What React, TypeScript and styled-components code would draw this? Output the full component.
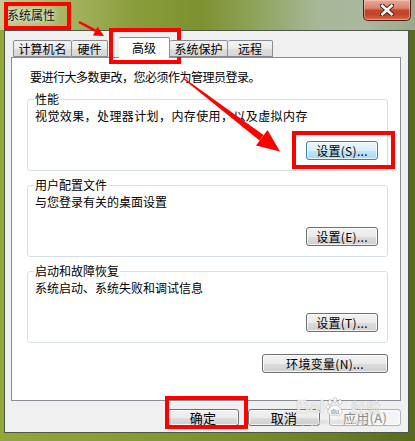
import React from 'react';
import styled, { createGlobalStyle } from 'styled-components';

const GlobalStyle = createGlobalStyle`
  html, body { margin: 0; padding: 0; }
  body {
    width: 415px; height: 441px; overflow: hidden;
    font-family: "Noto Sans CJK SC", "Noto Sans", sans-serif;
    color: #000;
  }
  * { box-sizing: border-box; }
`;

const Window = styled.div`
  position: relative;
  width: 415px;
  height: 441px;
  display: flex;
  flex-direction: column;
  overflow: hidden;
  background: linear-gradient(to right, #93a638 0%, #8a9e34 25%, #7a902c 55%, #6a7f26 80%, #56691f 100%);
`;

const TitleBar = styled.div`
  height: 30px;
  flex: none;
  display: flex;
  justify-content: space-between;
  align-items: flex-start;
  padding: 0 4px 0 7px;
  background: linear-gradient(to right, #c4cc92 0%, #aab766 14%, #8a9e3c 32%, #7c912f 48%, #8fa45c 62%, #a6b796 76%, #abb8a0 88%, #9ba98a 100%);
`;

const Title = styled.div`
  margin-top: 8px;
  font-size: 12px;
  line-height: 14px;
  color: #111;
  text-shadow: 0 0 4px rgba(255, 255, 255, 0.9), 0 0 8px rgba(255, 255, 255, 0.6);
`;

const CloseButton = styled.div`
  width: 48px;
  height: 21px;
  display: flex;
  align-items: center;
  justify-content: center;
  border: 1px solid #4a1d14;
  border-top: none;
  border-radius: 0 0 5px 5px;
  background: linear-gradient(#e9a897 0%, #dc8470 40%, #c6452c 52%, #c34328 72%, #dc6a47 100%);
  box-shadow: inset 0 0 0 1px rgba(255, 220, 210, 0.45);
`;

const Client = styled.div`
  flex: 1;
  margin: 0 6px 8px 4px;
  border: 1px solid #4e5648;
  background: #f0f0f0;
  display: flex;
  flex-direction: column;
  padding: 6px 7px 6px 6px;
`;

const TabRow = styled.div`
  display: flex;
  align-items: flex-end;
  height: 21px;
  margin-bottom: -1px;
  padding-left: 2px;
  position: relative;
  z-index: 1;
`;

const Tab = styled.div<{ $w: number; $active?: boolean; $gap?: number }>`
  width: ${(p) => p.$w}px;
  margin-left: ${(p) => p.$gap ?? 0}px;
  height: ${(p) => (p.$active ? 21 : 17)}px;
  margin-bottom: ${(p) => (p.$active ? 0 : 1)}px;
  border: 1px solid #898c95;
  border-bottom: ${(p) => (p.$active ? 'none' : '1px solid #898c95')};
  border-radius: 2px 2px 0 0;
  background: ${(p) =>
    p.$active ? '#ffffff' : 'linear-gradient(#f3f3f3 0%, #ebebeb 50%, #dddddd 51%, #d6d6d6 100%)'};
  font-size: 12px;
  line-height: ${(p) => (p.$active ? 20 : 16)}px;
  text-align: center;
  white-space: nowrap;
  & + & { border-left: ${(p) => (p.$active ? '1px solid #898c95' : 'none')}; }
`;

const Panel = styled.div`
  flex: 1;
  background: #fff;
  border: 1px solid #898c95;
  display: flex;
  flex-direction: column;
  padding: 12px 12px 0 15px;
`;

const Line = styled.div<{ $tracking?: number; $indent?: number }>`
  font-size: 12px;
  line-height: 14px;
  letter-spacing: ${(p) => p.$tracking ?? 0}px;
  margin-left: ${(p) => p.$indent ?? 0}px;
  white-space: nowrap;
`;

const Group = styled.fieldset<{ $top: number }>`
  margin: ${(p) => p.$top}px 0 0 0;
  padding: 3px 9px 10px 7px;
  border: 1px solid #d5dfe5;
  border-radius: 3px;
  min-width: 0;
`;

const Legend = styled.legend`
  font-size: 12px;
  line-height: 14px;
  padding: 0 1px;
  margin-left: -1px;
`;

const ButtonRow = styled.div<{ $top: number }>`
  display: flex;
  justify-content: flex-end;
  gap: 9px;
  margin-top: ${(p) => p.$top}px;
`;

const Button = styled.div<{ $w: number; $h?: number; $size?: number; $variant?: 'normal' | 'hot' | 'disabled' }>`
  width: ${(p) => p.$w}px;
  height: ${(p) => p.$h ?? 19}px;
  border-radius: 3px;
  display: flex;
  align-items: center;
  justify-content: center;
  font-size: ${(p) => p.$size ?? 12}px;
  line-height: 1;
  letter-spacing: 0.3px;
  white-space: nowrap;
  color: ${(p) => (p.$variant === 'disabled' ? '#8a8a8a' : '#000')};
  border: 1px solid
    ${(p) => (p.$variant === 'hot' ? '#3c7fb1' : p.$variant === 'disabled' ? '#adb2b5' : '#707070')};
  background: ${(p) =>
    p.$variant === 'hot'
      ? 'linear-gradient(#eaf6fd 0%, #d9f0fc 50%, #bee6fd 51%, #a7d9f5 100%)'
      : p.$variant === 'disabled'
      ? '#f4f4f4'
      : 'linear-gradient(#f2f2f2 0%, #ebebeb 50%, #dddddd 51%, #cfcfcf 100%)'};
  box-shadow: inset 0 0 0 1px rgba(255, 255, 255, 0.75);
`;

const EnvRow = styled.div`
  display: flex;
  justify-content: flex-end;
  margin-top: 11px;
`;

const FooterRow = styled.div`
  display: flex;
  justify-content: flex-end;
  gap: 9px;
  margin-top: 8px;
`;

const RedBox = styled.div<{ $x: number; $y: number; $w: number; $h: number }>`
  position: absolute;
  left: ${(p) => p.$x}px;
  top: ${(p) => p.$y}px;
  width: ${(p) => p.$w}px;
  height: ${(p) => p.$h}px;
  border: 4px solid #ff0000;
  pointer-events: none;
`;

const ArrowLayer = styled.svg`
  position: absolute;
  left: 0;
  top: 0;
  width: 415px;
  height: 441px;
  pointer-events: none;
`;

const Watermark = styled.div`
  position: absolute;
  left: 296px;
  top: 396px;
  display: flex;
  flex-direction: column;
  align-items: flex-start;
  pointer-events: none;
`;

const WatermarkMain = styled.div`
  display: flex;
  align-items: center;
  gap: 1px;
  color: rgba(255, 255, 255, 0.8);
  text-shadow: 0 0 1px rgba(90, 90, 90, 0.55);
`;

const WmBai = styled.span`
  font-family: "Liberation Sans", Arial, sans-serif;
  font-weight: bold;
  font-size: 19px;
  line-height: 22px;
  letter-spacing: -0.5px;
`;

const WmJingyan = styled.span`
  font-size: 15px;
  line-height: 22px;
  margin-left: 5px;
`;

const WmSub = styled.div`
  font-family: "Liberation Sans", Arial, sans-serif;
  font-size: 8px;
  line-height: 8px;
  margin-left: 6px;
  color: rgba(255, 255, 255, 0.75);
  text-shadow: 0 0 1px rgba(90, 90, 90, 0.5);
`;

function Paw() {
  return (
    <svg width="20" height="20" viewBox="0 0 20 20">
      <g fill="rgba(255,255,255,0.8)" stroke="rgba(90,90,90,0.45)" strokeWidth="0.6">
        <ellipse cx="5" cy="5" rx="2" ry="2.6" />
        <ellipse cx="10" cy="3" rx="2" ry="2.6" />
        <ellipse cx="15" cy="5" rx="2" ry="2.6" />
        <ellipse cx="3" cy="10" rx="1.8" ry="2.3" />
        <path d="M10 8 C 14 8, 18 13, 17 16 C 16 19, 12 18, 10 18 C 8 18, 4 19, 3 16 C 2 13, 6 8, 10 8 Z" />
      </g>
      <text x="10" y="16.5" fontSize="7" textAnchor="middle" fontFamily="Liberation Sans, Arial, sans-serif" fontWeight="bold" fill="rgba(150,150,150,0.6)">du</text>
    </svg>
  );
}

function CloseGlyph() {
  return (
    <svg width="14" height="12" viewBox="0 0 14 12">
      <path d="M2 1.5 L12 10.5 M12 1.5 L2 10.5" stroke="#4b2b26" strokeWidth="4.6" strokeLinecap="square" />
      <path d="M2.4 1.9 L11.6 10.1 M11.6 1.9 L2.4 10.1" stroke="#ffffff" strokeWidth="2.6" strokeLinecap="square" />
    </svg>
  );
}

export default function App() {
  return (
    <>
      <GlobalStyle />
      <Window>
        <TitleBar>
          <Title>系统属性</Title>
          <CloseButton>
            <CloseGlyph />
          </CloseButton>
        </TitleBar>
        <Client>
          <TabRow>
            <Tab $w={59}>计算机名</Tab>
            <Tab $w={36}>硬件</Tab>
            <Tab $w={51} $gap={11} $active>
              高级
            </Tab>
            <Tab $w={58}>系统保护</Tab>
            <Tab $w={45}>远程</Tab>
          </TabRow>
          <Panel>
            <Line $indent={3} $tracking={-0.5}>
              要进行大多数更改，您必须作为管理员登录。
            </Line>
            <Group $top={8}>
              <Legend>性能</Legend>
              <Line $tracking={0.4}>视觉效果，处理器计划，内存使用，以及虚拟内存</Line>
              <ButtonRow $top={18}>
                <Button $w={72} $variant="hot">设置(S)...</Button>
              </ButtonRow>
            </Group>
            <Group $top={7}>
              <Legend>用户配置文件</Legend>
              <Line>与您登录有关的桌面设置</Line>
              <ButtonRow $top={18}>
                <Button $w={72}>设置(E)...</Button>
              </ButtonRow>
            </Group>
            <Group $top={7}>
              <Legend>启动和故障恢复</Legend>
              <Line>系统启动、系统失败和调试信息</Line>
              <ButtonRow $top={18}>
                <Button $w={72}>设置(T)...</Button>
              </ButtonRow>
            </Group>
            <EnvRow>
              <Button $w={126}>环境变量(N)...</Button>
            </EnvRow>
          </Panel>
          <FooterRow>
            <Button $w={72} $h={17} $size={13}>确定</Button>
            <Button $w={72} $h={17} $size={13}>取消</Button>
            <Button $w={72} $h={17} $size={13} $variant="disabled">应用(A)</Button>
          </FooterRow>
        </Client>

        <Watermark>
          <WatermarkMain>
            <WmBai>Bai</WmBai>
            <Paw />
            <WmJingyan>经验</WmJingyan>
          </WatermarkMain>
          <WmSub>jingyan.baidu.com</WmSub>
        </Watermark>

        <RedBox $x={4} $y={2} $w={67} $h={28} />
        <RedBox $x={109} $y={28} $w={72} $h={36} />
        <RedBox $x={292} $y={131} $w={103} $h={38} />
        <RedBox $x={165} $y={396} $w={83} $h={33} />

        <ArrowLayer viewBox="0 0 415 441">
          <g fill="#ff0000">
            <polygon points="78.5,22.9 79.5,21.1 96.2,29.6 95.0,32.0" />
            <polygon points="104,36 92.9,35.5 97.7,26.7" />
            <polygon points="182.7,78.4 183.3,77.6 263.5,135.0 259.5,140.4" />
            <polygon points="280,151.5 256,145.5 267.5,130" />
          </g>
        </ArrowLayer>
      </Window>
    </>
  );
}
